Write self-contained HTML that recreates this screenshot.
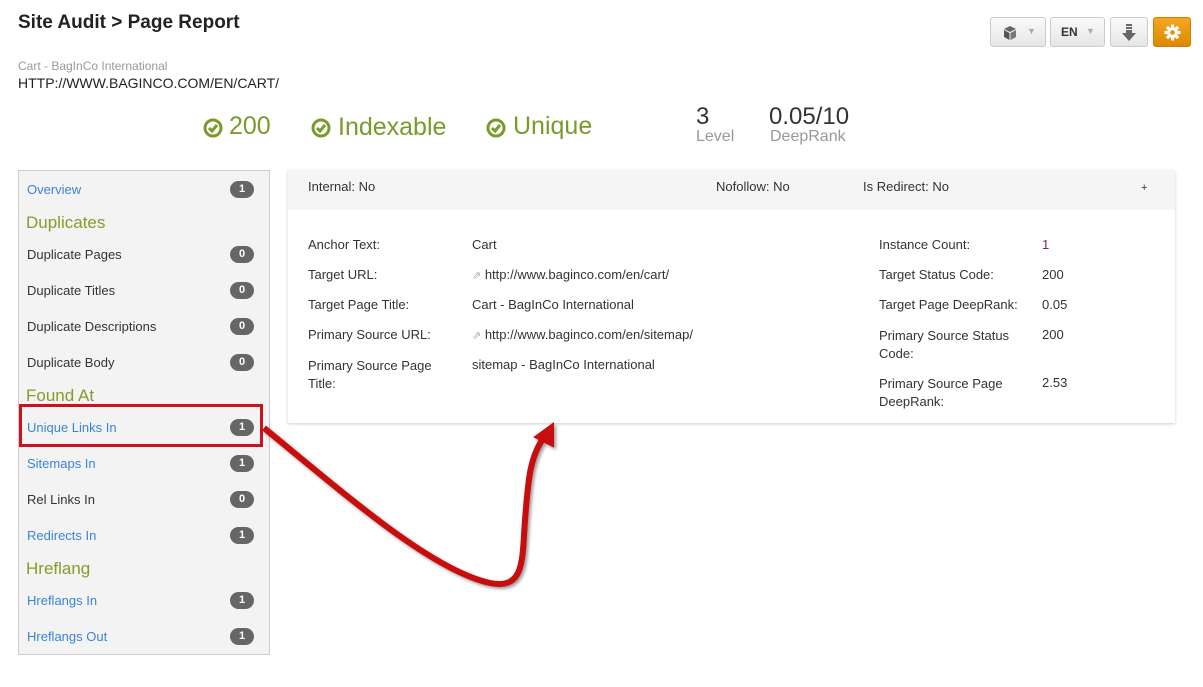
<!DOCTYPE html>
<html><head><meta charset="utf-8"><style>
*{box-sizing:border-box;margin:0;padding:0}
body{width:1203px;height:687px;background:#fff;font-family:"Liberation Sans",sans-serif;color:#333;position:relative;overflow:hidden;font-size:13px}
.a{position:absolute;white-space:nowrap}
.btn{position:absolute;top:17px;height:30px;border:1px solid #ccc;border-radius:3px;background:linear-gradient(#fafafa,#e6e6e6)}
.g{color:#7a9a2a}
.side{position:absolute;left:18px;top:170px;width:252px;height:485px;background:#f3f3f3;border:1px solid #ccc}
.it{position:absolute;left:8px;font-size:13px}
.bd{position:absolute;left:211px;width:24px;height:17px;border-radius:9px;background:#666;color:#fff;font-size:11px;font-weight:bold;text-align:center;line-height:17px}
.h{position:absolute;left:7px;font-size:17px;color:#8a9a2a}
.lnk{color:#3a84d6}
.card{position:absolute;left:288px;top:170px;width:887px;height:253px;background:#fff;box-shadow:0 1px 3px rgba(0,0,0,.2)}
.l{position:absolute;font-size:13px;color:#333;white-space:nowrap}
</style></head><body>
<div class="a" style="left:18px;top:12px;font-size:19px;font-weight:bold;color:#222">Site Audit &gt; Page Report</div>
<div class="a" style="left:18px;top:59px;font-size:12px;color:#999">Cart - BagInCo International</div>
<div class="a" style="left:18px;top:75px;font-size:14px;color:#222">HTTP://WWW.BAGINCO.COM/EN/CART/</div>

<div class="btn" style="left:990px;width:56px"><svg class="a" style="left:11px;top:7px" width="16" height="16" viewBox="0 0 16 16"><path d="M8 1L14 4L8 7L2 4Z" fill="#666"/><path d="M2 5L7.5 8V15L2 12Z" fill="#555"/><path d="M14 5L8.5 8V15L14 12Z" fill="#777"/></svg><span class="a" style="left:36px;top:8px;font-size:9px;color:#aaa">▼</span></div>
<div class="btn" style="left:1050px;width:55px"><span class="a" style="left:10px;top:7px;font-weight:bold;font-size:12px;color:#333">EN</span><span class="a" style="left:35px;top:8px;font-size:9px;color:#aaa">▼</span></div>
<div class="btn" style="left:1110px;width:38px"><svg class="a" style="left:11px;top:6px" width="14" height="18" viewBox="0 0 14 18"><rect x="4" y="0" width="6" height="2" fill="#666"/><rect x="4" y="3" width="6" height="2" fill="#666"/><rect x="4" y="6" width="6" height="3" fill="#666"/><path d="M0 9H14L7 17Z" fill="#666"/></svg></div>
<div class="btn" style="left:1153px;width:38px;background:linear-gradient(#f5a623,#dd8a00);border-color:#d08000"><svg class="a" style="left:10px;top:6px" width="17" height="17" viewBox="0 0 16 16"><g fill="#fff"><circle cx="8" cy="8" r="5"/><rect x="6.5" y="0.5" width="3" height="15"/><rect x="0.5" y="6.5" width="15" height="3"/><rect x="6.5" y="0.5" width="3" height="15" transform="rotate(45 8 8)"/><rect x="6.5" y="0.5" width="3" height="15" transform="rotate(-45 8 8)"/></g><circle cx="8" cy="8" r="2.2" fill="#e69500"/></svg></div>

<svg class="a" style="left:203px;top:118px" width="20" height="20" viewBox="0 0 20 20"><circle cx="10" cy="10" r="8" fill="none" stroke="#7a9a2a" stroke-width="3"/><path d="M6 10L9 13L14 7" fill="none" stroke="#7a9a2a" stroke-width="3"/></svg>
<div class="a g" style="left:229px;top:112px;font-size:25px">200</div>
<svg class="a" style="left:311px;top:118px" width="20" height="20" viewBox="0 0 20 20"><circle cx="10" cy="10" r="8" fill="none" stroke="#7a9a2a" stroke-width="3"/><path d="M6 10L9 13L14 7" fill="none" stroke="#7a9a2a" stroke-width="3"/></svg>
<div class="a g" style="left:338px;top:113px;font-size:25px">Indexable</div>
<svg class="a" style="left:486px;top:118px" width="20" height="20" viewBox="0 0 20 20"><circle cx="10" cy="10" r="8" fill="none" stroke="#7a9a2a" stroke-width="3"/><path d="M6 10L9 13L14 7" fill="none" stroke="#7a9a2a" stroke-width="3"/></svg>
<div class="a g" style="left:513px;top:112px;font-size:25px">Unique</div>
<div class="a" style="left:696px;top:103px;font-size:24px;color:#333">3</div>
<div class="a" style="left:696px;top:128px;font-size:16px;color:#999">Level</div>
<div class="a" style="left:769px;top:103px;font-size:24px;color:#333">0.05/10</div>
<div class="a" style="left:770px;top:128px;font-size:16px;color:#999">DeepRank</div>

<div class="side">
<div class="it lnk" style="top:11px">Overview</div><div class="bd" style="top:10px">1</div>
<div class="h" style="top:42px">Duplicates</div>
<div class="it" style="top:76px">Duplicate Pages</div><div class="bd" style="top:75px">0</div>
<div class="it" style="top:112px">Duplicate Titles</div><div class="bd" style="top:111px">0</div>
<div class="it" style="top:148px">Duplicate Descriptions</div><div class="bd" style="top:147px">0</div>
<div class="it" style="top:184px">Duplicate Body</div><div class="bd" style="top:183px">0</div>
<div class="h" style="top:215px">Found At</div>
<div class="it lnk" style="top:249px">Unique Links In</div><div class="bd" style="top:248px">1</div>
<div class="it lnk" style="top:285px">Sitemaps In</div><div class="bd" style="top:284px">1</div>
<div class="it" style="top:321px">Rel Links In</div><div class="bd" style="top:320px">0</div>
<div class="it lnk" style="top:357px">Redirects In</div><div class="bd" style="top:356px">1</div>
<div class="h" style="top:388px">Hreflang</div>
<div class="it lnk" style="top:422px">Hreflangs In</div><div class="bd" style="top:421px">1</div>
<div class="it lnk" style="top:458px">Hreflangs Out</div><div class="bd" style="top:457px">1</div>
</div>
<div class="a" style="left:19px;top:404px;width:244px;height:43px;border:3px solid #c8141a"></div>

<div class="card">
<div style="position:absolute;left:0;top:0;width:887px;height:40px;background:#f5f5f5"></div>
<div class="l" style="left:20px;top:9px">Internal: No</div>
<div class="l" style="left:428px;top:9px">Nofollow: No</div>
<div class="l" style="left:575px;top:9px">Is Redirect: No</div>
<div class="l" style="left:853px;top:12px;font-size:11px">+</div>
<div class="l" style="left:20px;top:67px">Anchor Text:</div><div class="l" style="left:184px;top:67px">Cart</div>
<div class="l" style="left:20px;top:97px">Target URL:</div><div class="l lnk" style="left:184px;top:97px"><span style="color:#aaa;font-size:11px">⇗</span> http://www.baginco.com/en/cart/</div>
<div class="l" style="left:20px;top:127px">Target Page Title:</div><div class="l" style="left:184px;top:127px">Cart - BagInCo International</div>
<div class="l" style="left:20px;top:157px">Primary Source URL:</div><div class="l lnk" style="left:184px;top:157px"><span style="color:#aaa;font-size:11px">⇗</span> http://www.baginco.com/en/sitemap/</div>
<div class="l" style="left:20px;top:187px;line-height:18px">Primary Source Page<br>Title:</div><div class="l" style="left:184px;top:187px">sitemap - BagInCo International</div>
<div class="l" style="left:591px;top:67px">Instance Count:</div><div class="l" style="left:754px;top:67px;color:#7a2a6a">1</div>
<div class="l" style="left:591px;top:97px">Target Status Code:</div><div class="l" style="left:754px;top:97px">200</div>
<div class="l" style="left:591px;top:127px">Target Page DeepRank:</div><div class="l" style="left:754px;top:127px">0.05</div>
<div class="l" style="left:591px;top:157px;line-height:18px">Primary Source Status<br>Code:</div><div class="l" style="left:754px;top:157px">200</div>
<div class="l" style="left:591px;top:205px;line-height:18px">Primary Source Page<br>DeepRank:</div><div class="l" style="left:754px;top:205px">2.53</div>
</div>

<svg class="a" style="left:0;top:0" width="1203" height="687">
<defs><filter id="s"><feDropShadow dx="2" dy="2" stdDeviation="1.5" flood-opacity="0.4"/></filter></defs>
<g filter="url(#s)">
<path d="M264 428 C340 490 430 570 490 583 C525 590 522 560 525 520 C528 480 530 455 545 436" fill="none" stroke="#c8080c" stroke-width="6"/>
<path d="M535 437 L553 424 L553 446 Z" fill="#c8080c" stroke="#c8080c" stroke-width="2"/>
</g>
</svg>
</body></html>
